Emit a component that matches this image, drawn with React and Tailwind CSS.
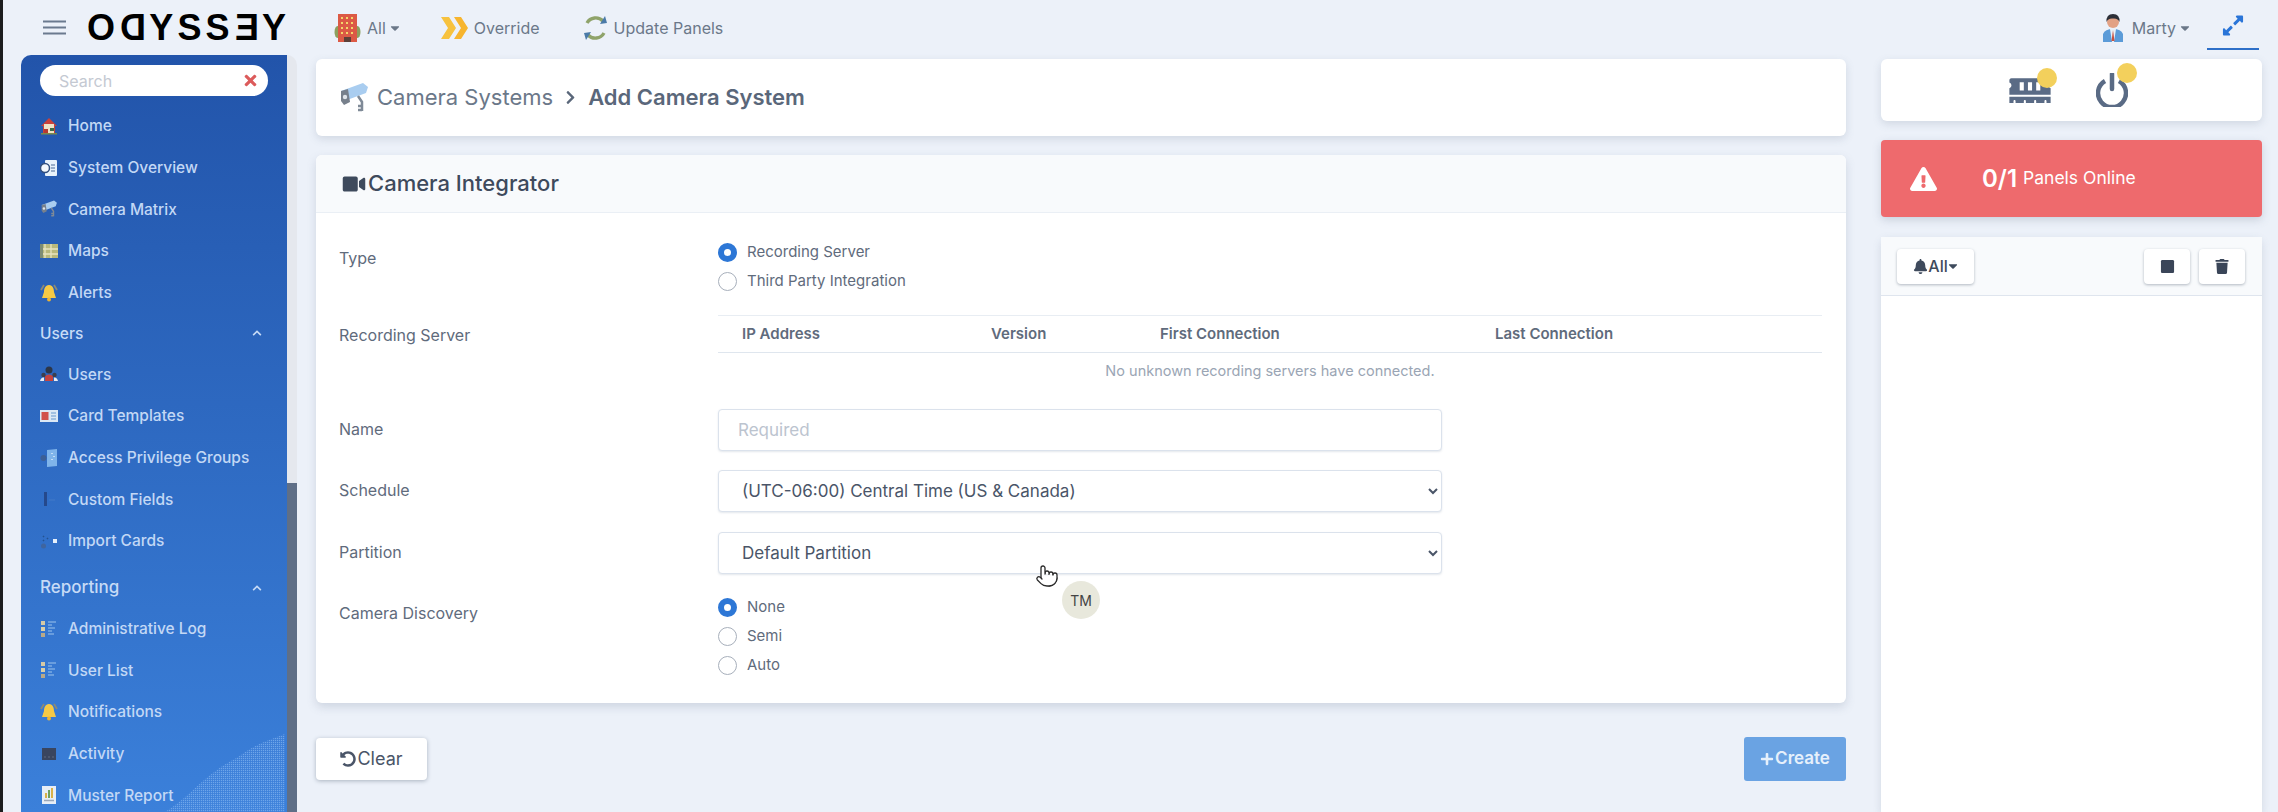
import React from "react";
import { Pointer } from "lucide-react";
import {
  FaBell,
  FaCaretDown,
  FaChevronRight,
  FaChevronUp,
  FaExclamationTriangle,
  FaExpandAlt,
  FaMemory,
  FaPlus,
  FaStop,
  FaTimes,
  FaTrash,
  FaUndoAlt,
  FaVideo,
} from "react-icons/fa";

const font = "font-['Inter','Liberation_Sans',sans-serif]";

/* small colour pictograms, they are tiny and blurry in the picture */
const HomeIcon = () => (
  <svg viewBox="0 0 18 18" className="w-[18px] h-[18px]">
    <path d="M9 1 L17 9 H15 V17 H3 V9 H1 Z" fill="#c9413b" />
    <rect x="4" y="7" width="10" height="10" fill="#efe3c8" />
    <rect x="4" y="12" width="4" height="5" fill="#b5382f" />
    <rect x="10" y="11" width="4" height="3" fill="#3d6b45" />
    <rect x="1" y="16" width="16" height="1.5" fill="#7c8a4a" />
  </svg>
);
const OverviewIcon = () => (
  <svg viewBox="0 0 18 18" className="w-[18px] h-[18px]">
    <rect x="5" y="1" width="12" height="16" rx="1" fill="#e8f2fb" />
    <circle cx="5" cy="9" r="4.5" fill="#f4f8fc" stroke="#33507f" strokeWidth="1.5" />
    <path d="M11 6 h4 M11 9 h4 M11 12 h4" stroke="#4d6a96" strokeWidth="1.2" />
  </svg>
);
const CameraIcon = ({ big }) => (
  <svg viewBox="0 0 30 32" className={big ? "w-[30px] h-[32px]" : "w-[18px] h-[18px]"}>
    <path d="M2 9 L24 1 L29 5 L27 11 L8 18 Z" fill="#a9cdf0" />
    <path d="M2 9 L9 7 L11 20 L5 23 L2 19 Z" fill="#77808c" />
    <circle cx="6" cy="15" r="2.2" fill="#dfe4ea" />
    <path d="M19 14 L23 20 V29 M19 24 H23 M19 28 H23" stroke="#7f8a97" strokeWidth="2.5" fill="none" />
  </svg>
);
const MapIcon = () => (
  <svg viewBox="0 0 18 18" className="w-[18px] h-[18px]">
    <rect x="0" y="2" width="18" height="14" fill="#b9b97c" />
    <path d="M5 2 V16 M11 2 V16 M0 7 H18 M0 12 H18" stroke="#e7e4c0" strokeWidth="1.3" />
    <rect x="0" y="2" width="3" height="14" fill="#7d8c74" />
  </svg>
);
const BellIcon = () => (
  <svg viewBox="0 0 18 18" className="w-[18px] h-[18px]">
    <path d="M1 6 L4 1 M17 6 L14 1" stroke="#8a8a78" strokeWidth="1.8" />
    <path d="M9 1 C13 1 14 5 14 8 L16 14 H2 L4 8 C4 5 5 1 9 1 Z" fill="#f6c945" />
    <circle cx="9" cy="15.5" r="2" fill="#eeb42f" />
  </svg>
);
const UsersIcon = () => (
  <svg viewBox="0 0 18 18" className="w-[18px] h-[18px]">
    <circle cx="9" cy="5" r="3.5" fill="#2d3648" />
    <path d="M5 16 V11 Q9 8 13 11 V16 Z" fill="#c5433f" />
    <circle cx="3.5" cy="10" r="2.2" fill="#3a3f50" />
    <circle cx="14.5" cy="10" r="2.2" fill="#3a3f50" />
    <path d="M0 16 Q1 12 4 12.5 V16 Z M18 16 Q17 12 14 12.5 V16 Z" fill="#e8ecf2" />
  </svg>
);
const CardIcon = () => (
  <svg viewBox="0 0 18 18" className="w-[18px] h-[18px]">
    <rect x="0" y="3" width="18" height="12" fill="#dbe8f5" />
    <rect x="1.5" y="5" width="7" height="8" fill="#d1524c" />
    <path d="M11 6 h5 M11 9 h5 M11 12 h5" stroke="#8fb3da" strokeWidth="1.4" />
  </svg>
);
const AccessIcon = () => (
  <svg viewBox="0 0 18 18" className="w-[18px] h-[18px]">
    <path d="M7 1 L17 0 V17 L7 18 Z" fill="#7fb4ea" />
    <circle cx="3.5" cy="9" r="3" fill="#3c5f95" />
    <path d="M12 4 v1 M14 7 v1 M12 10 v1" stroke="#dcebfa" strokeWidth="1.5" />
  </svg>
);
const CustomIcon = () => (
  <svg viewBox="0 0 18 18" className="w-[18px] h-[18px]">
    <rect x="4" y="2" width="3" height="14" fill="#25498c" />
    <path d="M9 10 H15" stroke="#3f78c8" strokeWidth="1.3" />
  </svg>
);
const ImportIcon = () => (
  <svg viewBox="0 0 18 18" className="w-[18px] h-[18px]">
    <rect x="13" y="7" width="4" height="4" fill="#e6f0fb" />
    <circle cx="3.5" cy="14" r="2.5" fill="#3f659f" />
    <path d="M3 4 l1 1 M7 6 l1 1 M3 8 l1 1" stroke="#24528f" strokeWidth="1.5" />
  </svg>
);
const ListIcon = () => (
  <svg viewBox="0 0 18 18" className="w-[18px] h-[18px]">
    <rect x="1" y="1" width="4" height="4" fill="#d5c9a5" />
    <rect x="1" y="7" width="4" height="4" fill="#d9cfa9" />
    <rect x="1" y="13" width="4" height="4" fill="#b9a988" />
    <path d="M8 2 h8 M8 5 h4 M8 8 h7 M8 11 h4 M8 14 h6" stroke="#9cc3ec" strokeWidth="1.1" />
  </svg>
);
const ActivityIcon = () => (
  <svg viewBox="0 0 18 18" className="w-[18px] h-[18px]">
    <rect x="2" y="3" width="14" height="12" fill="#39455f" />
    <path d="M4 12 h2 M8 12 h2 M12 12 h2" stroke="#5f6a80" strokeWidth="1.2" />
  </svg>
);
const MusterIcon = () => (
  <svg viewBox="0 0 18 18" className="w-[18px] h-[18px]">
    <rect x="2" y="0" width="14" height="18" fill="#e7eef6" />
    <rect x="5" y="7" width="2" height="5" fill="#d9b24a" />
    <rect x="8" y="4" width="2" height="8" fill="#6fa05f" />
    <rect x="11" y="2" width="2" height="10" fill="#d9b24a" />
    <path d="M4 14.5 h10" stroke="#9aa7b8" strokeWidth="1.5" />
  </svg>
);

const BuildingIcon = () => (
  <svg viewBox="0 0 27 30" className="w-[27px] h-[30px]">
    <ellipse cx="3.5" cy="19" rx="3" ry="6" fill="#8da05e" />
    <ellipse cx="23.5" cy="19" rx="3" ry="6" fill="#8da05e" />
    <rect x="4" y="1" width="19" height="28" fill="#dc5a45" />
    <path d="M7 5 h2 M12 5 h2 M17 5 h2 M7 10 h2 M12 10 h2 M17 10 h2 M7 15 h2 M12 15 h2 M17 15 h2 M7 20 h2 M12 20 h2 M17 20 h2" stroke="#f3d76b" strokeWidth="1.8" />
    <rect x="10" y="24" width="7" height="5" fill="#5d4038" />
  </svg>
);
const OverrideIcon = () => (
  <svg viewBox="0 0 29 24" className="w-[29px] h-[24px]">
    <path d="M1 1 H9 L16 12 L9 23 H1 L8 12 Z" fill="#f7c23e" />
    <path d="M14 1 H21 L28 12 L21 23 H14 L21 12 Z" fill="#f7b52e" />
  </svg>
);
const UpdateIcon = () => (
  <svg viewBox="0 0 27 26" className="w-[27px] h-[26px]" fill="none">
    <path d="M5 8 A10 10 0 0 1 21 6" stroke="#8fa36a" strokeWidth="3.4" />
    <path d="M22 18 A10 10 0 0 1 6 20" stroke="#8fa36a" strokeWidth="3.4" />
    <path d="M18 9 L25 8 L23 1 Z" fill="#4a7aa8" />
    <path d="M9 17 L2 18 L4 25 Z" fill="#4a7aa8" />
  </svg>
);
const AvatarIcon = () => (
  <svg viewBox="0 0 20 28" className="w-[20px] h-[28px]">
    <path d="M0 28 V20 Q2 15 10 15 Q18 15 20 20 V28 Z" fill="#5b9bd8" />
    <path d="M7 15 H13 L11 28 H9 Z" fill="#e8f0f8" />
    <path d="M10 16 L11.5 27 H8.5 Z" fill="#c9513f" />
    <circle cx="10" cy="8" r="6" fill="#e2a184" />
    <path d="M3.5 8 Q3 0 10 0 Q17 0 16.5 8 Q15 4 10 4.5 Q5 4 3.5 8 Z" fill="#2c2f38" />
  </svg>
);

const menu = [
  { label: "Home", icon: HomeIcon },
  { label: "System Overview", icon: OverviewIcon },
  { label: "Camera Matrix", icon: CameraIcon },
  { label: "Maps", icon: MapIcon },
  { label: "Alerts", icon: BellIcon },
  { heading: "Users" },
  { label: "Users", icon: UsersIcon },
  { label: "Card Templates", icon: CardIcon },
  { label: "Access Privilege Groups", icon: AccessIcon },
  { label: "Custom Fields", icon: CustomIcon },
  { label: "Import Cards", icon: ImportIcon },
  { heading: "Reporting", large: true },
  { label: "Administrative Log", icon: ListIcon },
  { label: "User List", icon: ListIcon },
  { label: "Notifications", icon: BellIcon },
  { label: "Activity", icon: ActivityIcon },
  { label: "Muster Report", icon: MusterIcon },
];

const Sidebar = () => (
  <aside className="ml-[18px] flex w-[276px] shrink-0 overflow-hidden rounded-t-[10px]">
    <div className="relative w-[266px] shrink-0 overflow-hidden bg-linear-to-b from-[#2254aa] to-[#3b80da] px-[19px] pt-[10px]">
      {/* wave in the corner */}
      <svg viewBox="0 0 120 78" className="absolute bottom-0 right-[2px] h-[78px] w-[120px]">
        <defs>
          <pattern id="dots" width="2" height="2" patternUnits="userSpaceOnUse">
            <rect width="1.2" height="1.2" fill="#6ea5ea" />
          </pattern>
        </defs>
        <path d="M0 78 C20 66 32 50 52 36 C62 28 70 26 80 18 C92 10 104 6 120 0 V78 Z" fill="url(#dots)" />
      </svg>
      <div className="flex h-[31px] w-[228px] items-center justify-between rounded-full bg-white pl-[19px] pr-[10px]">
        <span className="text-[16px] text-[#c4c9d2]">Search</span>
        <FaTimes className="h-[17px] w-[15px] text-[#dc5b5b]" />
      </div>
      <nav className="relative mt-[9px]">
        {menu.map((item) =>
          item.heading ? (
            <div
              key={item.heading}
              className={`flex h-[40px] items-center justify-between pr-[5px] font-medium text-[#c7dbf6] ${
                item.large ? "mt-[6px] text-[17px]" : "text-[15.5px]"
              }`}
            >
              <span>{item.heading}</span>
              <FaChevronUp className="h-[10px] w-[12px]" />
            </div>
          ) : (
            <div key={item.label} className="flex h-[41.7px] items-center gap-[10px] text-[15.5px] font-medium text-[#c3d8f5]">
              <item.icon />
              <span>{item.label}</span>
            </div>
          )
        )}
      </nav>
    </div>
    <div className="flex w-[10px] flex-col bg-[#e5e8ee]">
      <div className="mt-[428px] flex-1 bg-[#5f6f87]" />
    </div>
  </aside>
);

const Radio = ({ label, checked }) => (
  <label className="flex h-[28.7px] items-center gap-[10px] text-[15px] text-[#5f6b7c]">
    <input
      type="radio"
      readOnly
      checked={!!checked}
      className={`h-[19px] w-[19px] appearance-none rounded-full bg-white ${
        checked ? "border-[6px] border-[#2d77d6]" : "border border-[#a7afbb]"
      }`}
    />
    {label}
  </label>
);

const FormRow = ({ label, children }) => (
  <div className="mb-[19.5px] flex">
    <div className="w-[379px] shrink-0 pt-[9px] text-[16px] leading-[22px] text-[#5f6b7c]">{label}</div>
    <div className="min-w-0 flex-1">{children}</div>
  </div>
);

const controlClass =
  "h-[42px] w-[724px] rounded-[4px] border border-[#dbe2ec] bg-white px-[19px] text-[17px] text-[#4a5568] shadow-[0_1px_2px_rgba(148,163,184,0.25)]";

const MainPanel = () => (
  <main className="ml-[19px] w-[1530px] shrink-0 pt-[4px]">
    <div className="flex h-[77px] items-center gap-[8px] rounded-[6px] bg-white pl-[23px] shadow-[0_3px_8px_rgba(100,116,139,0.2)]">
      <CameraIcon big />
      <span className="text-[22px] text-[#6b7889]">Camera Systems</span>
      <FaChevronRight className="mx-[4px] h-[15px] w-[11px] text-[#5a677a]" />
      <span className="text-[22px] font-semibold text-[#5a677a]">Add Camera System</span>
    </div>

    <section className="mt-[19px] rounded-[6px] bg-white shadow-[0_4px_10px_rgba(100,116,139,0.22)]">
      <div className="flex h-[58px] items-center rounded-t-[6px] border-b border-[#eaeff5] bg-[#f8fafc] pl-[24px] text-[22px] font-medium text-[#3e4a5c]">
        <FaVideo className="h-[20px] w-[28px] text-[#3e4a5c]" />
        <span>Camera Integrator</span>
      </div>
      <div className="pl-[23px] pr-[24px] pt-[25px] pb-[4px]">
        <FormRow label="Type">
          <Radio label="Recording Server" checked />
          <Radio label="Third Party Integration" />
        </FormRow>
        <FormRow label="Recording Server">
          <table className="w-full table-fixed text-[15px] text-[#5f6b7c]">
            <thead>
              <tr className="h-[37px] border-y border-[#e8edf3] border-b-[#dfe6ee] text-left font-semibold">
                <th className="w-[273px] pl-[24px] font-semibold">IP Address</th>
                <th className="w-[169px] font-semibold">Version</th>
                <th className="w-[335px] font-semibold">First Connection</th>
                <th className="font-semibold">Last Connection</th>
              </tr>
            </thead>
            <tbody>
              <tr className="h-[37px]">
                <td colSpan={4} className="text-center text-[14.5px] text-[#9aa5b4]">
                  No unknown recording servers have connected.
                </td>
              </tr>
            </tbody>
          </table>
        </FormRow>
        <FormRow label="Name">
          <input placeholder="Required" className={`${controlClass} placeholder:text-[#bcc4cf]`} />
        </FormRow>
        <FormRow label="Schedule">
          <select className={controlClass} defaultValue="central">
            <option value="central">(UTC-06:00) Central Time (US &amp; Canada)</option>
          </select>
        </FormRow>
        <FormRow label="Partition">
          <select className={controlClass} defaultValue="default">
            <option value="default">Default Partition</option>
          </select>
        </FormRow>
        <FormRow label="Camera Discovery">
          <Radio label="None" checked />
          <Radio label="Semi" />
          <Radio label="Auto" />
        </FormRow>
      </div>
    </section>

    <div className="mt-[34px] flex items-center justify-between">
      <button className="flex h-[42px] w-[111px] items-center justify-center gap-[1px] rounded-[4px] bg-white text-[18px] text-[#4a5568] shadow-[0_1px_4px_rgba(71,85,105,0.4)]">
        <FaUndoAlt className="h-[16px] w-[16px]" />
        Clear
      </button>
      <button className="flex h-[44px] w-[102px] items-center justify-center gap-[1px] rounded-[3px] bg-[#6aa3e3] text-[17px] font-semibold text-[#e6f0fb]">
        <FaPlus className="h-[14px] w-[14px]" />
        Create
      </button>
    </div>
  </main>
);

const RightPanel = () => (
  <div className="ml-[35px] flex w-[381px] shrink-0 flex-col pt-[4px]">
    <div className="flex h-[62px] items-center rounded-[6px] bg-white pl-[128px] shadow-[0_3px_8px_rgba(100,116,139,0.2)]">
      <div className="relative">
        <FaMemory className="h-[33px] w-[42px] text-[#5a6b85]" />
        <span className="absolute -right-[6px] -top-[6px] h-[20px] w-[20px] rounded-full bg-[#f3d05c]" />
      </div>
      <div className="relative ml-[45px]">
        <svg viewBox="0 0 32 34" className="h-[34px] w-[32px]" fill="none" stroke="#5a6b85" strokeWidth="4.5">
          <path d="M9 8 A14 14 0 1 0 23 8" />
          <path d="M16 1 V16" strokeLinecap="round" />
        </svg>
        <span className="absolute -right-[9px] -top-[10px] h-[20px] w-[20px] rounded-full bg-[#f3d05c]" />
      </div>
    </div>

    <div className="mt-[19px] flex h-[77px] items-center rounded-[4px] bg-[#ee6a6d] pl-[29px] text-white shadow-[0_3px_8px_rgba(100,116,139,0.25)]">
      <FaExclamationTriangle className="h-[24px] w-[27px]" />
      <span className="ml-[45px] text-[24px] font-semibold">0/1</span>
      <span className="ml-[6px] text-[17.5px]">Panels Online</span>
    </div>

    <section className="mt-[20px] flex-1 rounded-t-[6px] bg-white shadow-[0_3px_8px_rgba(100,116,139,0.2)]">
      <div className="flex h-[59px] items-center justify-between border-b border-[#dfe5ee] bg-[#f8fafc] pl-[16px] pr-[17px]">
        <button className="flex h-[35px] w-[77px] items-center justify-center rounded-[4px] bg-white text-[16px] font-medium text-[#3e4a5c] shadow-[0_1px_3px_rgba(71,85,105,0.4)]">
          <FaBell className="h-[15px] w-[15px]" />
          All
          <FaCaretDown className="h-[14px] w-[10px]" />
        </button>
        <div className="flex gap-[9px]">
          <button className="flex h-[35px] w-[46px] items-center justify-center rounded-[4px] bg-white text-[#3a4558] shadow-[0_1px_3px_rgba(71,85,105,0.4)]">
            <FaStop className="h-[15px] w-[15px]" />
          </button>
          <button className="flex h-[35px] w-[46px] items-center justify-center rounded-[4px] bg-white text-[#3a4558] shadow-[0_1px_3px_rgba(71,85,105,0.4)]">
            <FaTrash className="h-[15px] w-[14px]" />
          </button>
        </div>
      </div>
    </section>
  </div>
);

const Header = () => (
  <header className="flex h-[55px] shrink-0 items-center text-[#6b7889]">
    <svg viewBox="0 0 23 15" className="ml-[40px] h-[15px] w-[23px]" stroke="#6b7a8f" strokeWidth="2">
      <path d="M0 1.5 H23 M0 7.5 H23 M0 13.5 H23" />
    </svg>
    <div className="ml-[21px] flex w-[200px] justify-between font-['Liberation_Sans',sans-serif] text-[36px] font-bold leading-none tracking-[1px] text-black">
      <span>O</span>
      <span className="-scale-x-100">D</span>
      <span>Y</span>
      <span>S</span>
      <span>S</span>
      <span className="-scale-x-100">E</span>
      <span>Y</span>
    </div>
    <div className="ml-[47px] flex items-center text-[16px]">
      <BuildingIcon />
      <span className="ml-[6px]">All</span>
      <FaCaretDown className="ml-[4px] h-[14px] w-[10px]" />
    </div>
    <div className="ml-[40px] flex items-center gap-[5px] text-[16px]">
      <OverrideIcon />
      <span>Override</span>
    </div>
    <div className="ml-[42px] flex items-center gap-[5px] text-[16px]">
      <UpdateIcon />
      <span>Update Panels</span>
    </div>
    <div className="ml-auto flex items-center text-[16px]">
      <AvatarIcon />
      <span className="ml-[9px]">Marty</span>
      <FaCaretDown className="ml-[4px] h-[14px] w-[10px]" />
    </div>
    <div className="ml-[17px] mr-[19px] flex h-[50px] w-[52px] items-center justify-center self-start border-b-2 border-[#2d6fc8] pt-[3px]">
      <FaExpandAlt className="h-[23px] w-[24px] text-[#2a75d8]" />
    </div>
  </header>
);

const App = () => (
  <div className={`relative flex h-[812px] overflow-hidden bg-[#ecf1f9] ${font}`}>
    <div className="w-[3px] shrink-0 bg-[#1c1c1e]" />
    <div className="flex min-w-0 flex-1 flex-col">
      <Header />
      <div className="flex min-h-0 flex-1">
        <Sidebar />
        <MainPanel />
        <RightPanel />
      </div>
    </div>

    {/* recorded pointer and presenter badge, over the form */}
    <Pointer className="absolute left-[1035px] top-[561px] h-[30px] w-[24px] fill-white text-[#2a2a2a]" strokeWidth={1.3} />
    <div className="absolute left-[1062px] top-[581px] flex h-[38px] w-[38px] items-center justify-center rounded-full bg-[#e8e8dc] text-[14px] text-[#444]">
      TM
    </div>
  </div>
);

export default App;
